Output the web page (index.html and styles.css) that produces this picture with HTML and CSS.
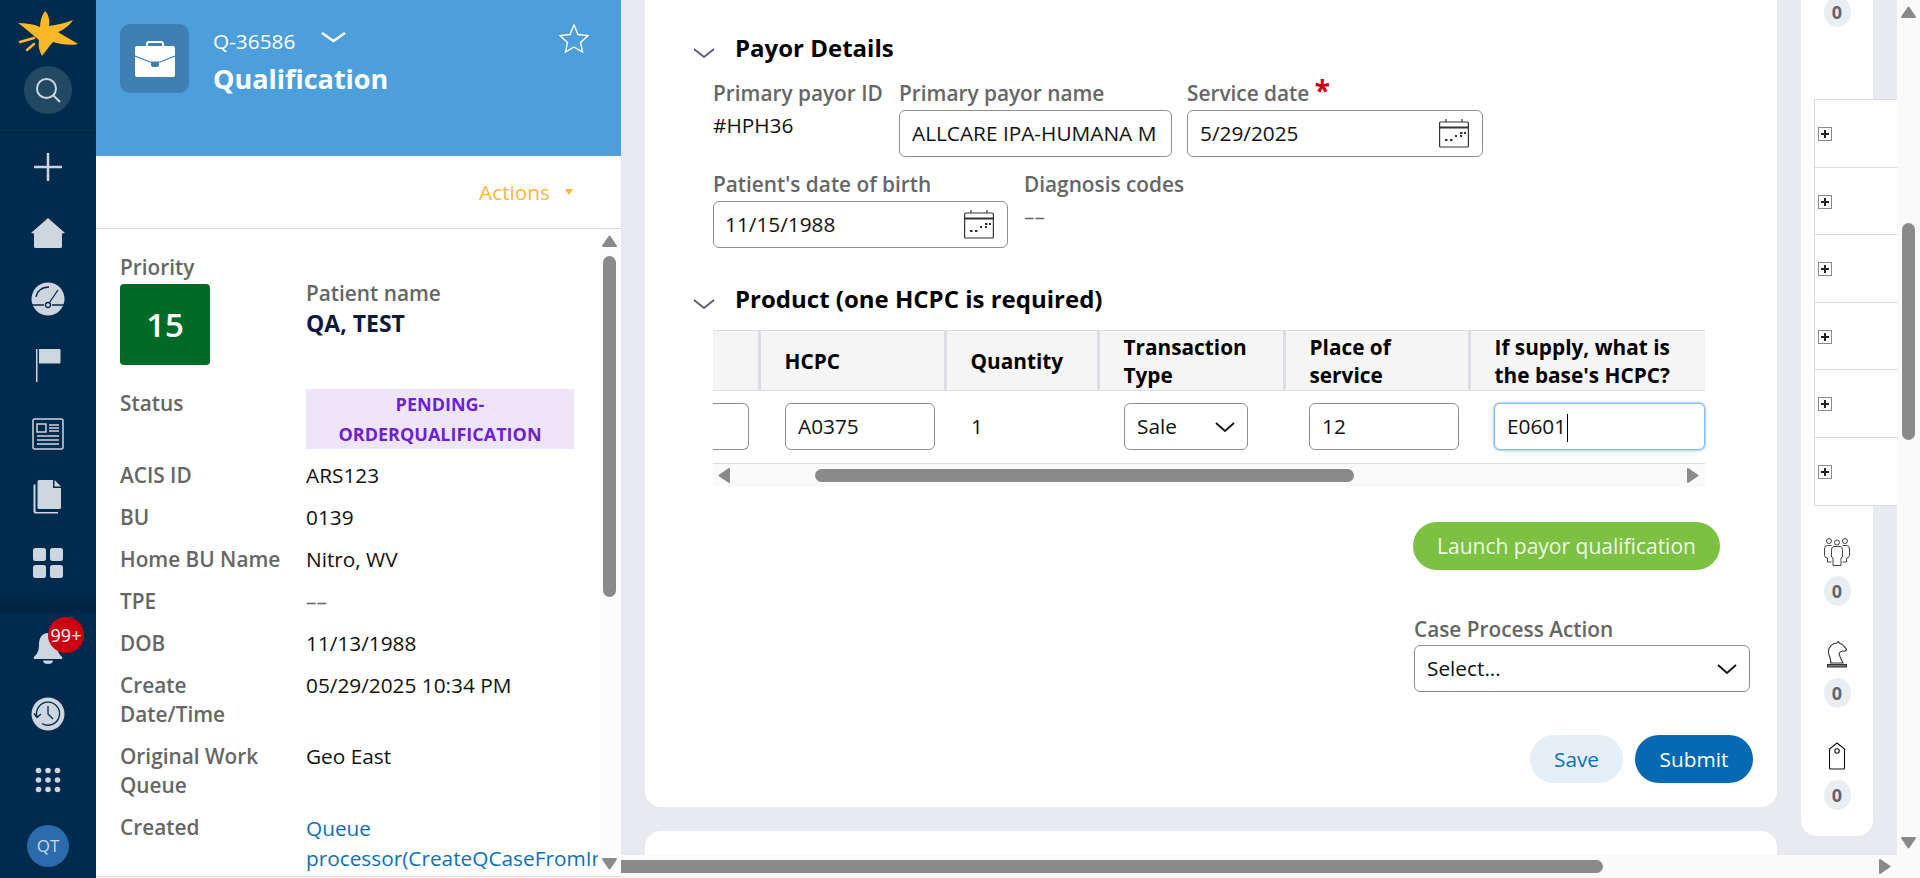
FILE: index.html
```html
<!DOCTYPE html>
<html>
    <head>
        <title>Qualification Q-36586</title>
        <link rel="stylesheet" href="styles.css">
    </head>
    <body>
        <nav class="nav">
            <div class="nav-top">
                <svg class="logo" width="66" height="48" viewBox="15 10 66 48">
                    <path fill="#fdb827" d="M45 11C49 15 50 21 49 26C57 25 66 23 73 20C69 26 63 30 58 32C64 36 72 40 78 44C70 46 60 44 53 42C49 46 46 51 42 56C39 51 38 45 39 40C33 35 25 28 18 23C26 23 33 24 40 27C40 21 42 15 45 11Z"/>
                    <path fill="none" stroke="#fdb827" stroke-width="2.5" stroke-linecap="round" d="M20 42L34 38M27 50L34 44"/>
                </svg>
                <div class="search">
                    <svg width="26" height="26" viewBox="0 0 26 26" fill="none" stroke="#cdd5df" stroke-width="2"><circle cx="11.500" cy="11.500" r="9.500"/><path d="M18.500 18.500L25 25"/></svg>
                </div>
            </div>
            <div class="nav-mid">
                <div class="nav-slot">
                    <svg width="28" height="28" viewBox="0 0 28 28" fill="none" stroke="#cdd5df" stroke-width="2.500"><path d="M14 0V28M0 14H28"/></svg>
                </div>
                <div class="nav-slot">
                    <svg width="34" height="30" viewBox="0 0 34 30"><path fill="#cdd5df" d="M17 0L34 15L31 15.500V28.500Q31 30 29.500 30H4.500Q3 30 3 28.500V15.500L0 15Z"/></svg>
                </div>
                <div class="nav-slot">
                    <svg width="34" height="34" viewBox="0 0 34 34"><circle cx="17" cy="17" r="16.500" fill="#cdd5df"/><path fill="none" stroke="#002b4d" stroke-width="1.300" d="M5 15C6 9 11 5 18 5M1 23H13M21 23H33M18.500 20.500L27 8"/><circle cx="17" cy="23" r="2.500" fill="#cdd5df" stroke="#002b4d" stroke-width="1.300"/></svg>
                </div>
                <div class="nav-slot">
                    <svg width="26" height="34" viewBox="0 0 26 34"><path fill="#cdd5df" d="M1 1H2.500V34H1ZM4 1H24.500Q25.500 1 25.500 2V14.500Q25.500 15.500 24.500 15.500H4Z"/></svg>
                </div>
                <div class="nav-slot nav-slot-low">
                    <svg width="32" height="32" viewBox="0 0 32 32" fill="none" stroke="#cdd5df" stroke-width="1.500"><rect x="1" y="1" width="30" height="30" rx="1.500"/><rect x="5" y="6" width="9" height="8"/><path d="M17 7H27M17 10H27M17 13H27M5 18H27M5 22H27M5 26H27"/></svg>
                </div>
                <div class="nav-slot">
                    <svg width="30" height="34" viewBox="0 0 30 34"><path fill="#cdd5df" d="M6 0H20V8H28V27.500Q28 29 26.500 29H6Q4.500 29 4.500 27.500V1.500Q4.500 0 6 0ZM21.500 0L28 6.500H21.500ZM2.500 4V30.500Q2.500 32 4 32H25V33.500H2.500Q0.500 33.500 0.500 31.500V5.500Q0.500 4 2.500 4Z"/></svg>
                </div>
                <div class="nav-slot">
                    <svg width="32" height="32" viewBox="0 0 32 32" fill="#cdd5df"><rect x="1" y="1" width="13" height="13" rx="2.500"/><rect x="18" y="1" width="13" height="13" rx="2.500"/><rect x="1" y="18" width="13" height="13" rx="2.500"/><rect x="18" y="18" width="13" height="13" rx="2.500"/></svg>
                </div>
            </div>
            <div class="nav-bottom">
                <div class="nav-slot">
                    <svg width="30" height="32" viewBox="0 0 30 32"><path fill="#cdd5df" d="M15 1C9 1 6 6 6 12C6 18 5 21 1 25Q0 27 2 27H28Q30 27 29 25C25 21 24 18 24 12C24 6 21 1 15 1ZM10 28.500H20C20 31 18 32 15 32C12 32 10 31 10 28.500Z"/></svg>
                    <span class="notif">99+</span>
                </div>
                <div class="nav-slot">
                    <svg width="34" height="34" viewBox="0 0 34 34"><circle cx="17" cy="17" r="16.500" fill="#cdd5df"/><path fill="none" stroke="#002b4d" stroke-width="1.300" d="M6 20A11.500 11.500 0 1 1 11 26.500M3 16.500L6 20.500L10 17M17 9V17L22 22"/></svg>
                </div>
                <div class="nav-slot">
                    <svg width="26" height="26" viewBox="0 0 26 26" fill="#cdd5df"><circle cx="3.500" cy="3.500" r="2.800"/><circle cx="13" cy="3.500" r="2.800"/><circle cx="22.500" cy="3.500" r="2.800"/><circle cx="3.500" cy="13" r="2.800"/><circle cx="13" cy="13" r="2.800"/><circle cx="22.500" cy="13" r="2.800"/><circle cx="3.500" cy="22.500" r="2.800"/><circle cx="13" cy="22.500" r="2.800"/><circle cx="22.500" cy="22.500" r="2.800"/></svg>
                </div>
                <div class="nav-slot">
                    <div class="avatar">QT</div>
                </div>
            </div>
        </nav>

        <section class="case-panel">
            <header class="case-head">
                <div class="case-icon">
                    <svg width="40" height="36" viewBox="0 0 40 36"><path fill="none" stroke="#fff" stroke-width="2" d="M12 6V3Q12 1 14 1H26Q28 1 28 3V6"/><rect y="5" width="40" height="31" rx="2" fill="#fff"/><path fill="none" stroke="#3f7fb3" stroke-width="1.200" d="M0 15L15 21H25L40 15"/><path fill="#3f7fb3" d="M16 21H24V24Q24 26 22 26H18Q16 26 16 24Z"/></svg>
                </div>
                <div class="case-title">
                    <div class="case-id">
                        <span>Q-36586</span>
                        <svg width="25" height="11" viewBox="0 0 25 11" fill="none" stroke="#fff" stroke-width="2.500"><path d="M1 1L12.500 9L24 1"/></svg>
                    </div>
                    <div class="case-name">Qualification</div>
                </div>
                <svg class="star" width="30" height="30" viewBox="0 0 30 30"><path fill="none" stroke="#fff" stroke-width="1.400" d="M15 2L19 11.500L29 12.500L21.500 19.500L23.500 29L15 24L6.500 29L8.500 19.500L1 12.500L11 11.500Z"/></svg>
            </header>
            <div class="case-actions">
                <span>Actions</span>
                <span class="caret"></span>
            </div>
            <div class="case-body">
                <div class="case-fields">
                    <div class="field-label">
                        Priority
                        <div class="priority">15</div>
                    </div>
                    <div class="patient">
                        <div class="field-label">Patient name</div>
                        <div class="patient-name">QA, TEST</div>
                    </div>
                    <div class="field-label">Status</div>
                    <div class="status">PENDING-<br>ORDERQUALIFICATION</div>
                    <div class="field-label">ACIS ID</div>
                    <div class="field-value">ARS123</div>
                    <div class="field-label">BU</div>
                    <div class="field-value">0139</div>
                    <div class="field-label">Home BU Name</div>
                    <div class="field-value">Nitro, WV</div>
                    <div class="field-label">TPE</div>
                    <div class="field-value muted">––</div>
                    <div class="field-label">DOB</div>
                    <div class="field-value">11/13/1988</div>
                    <div class="field-label">Create Date/Time</div>
                    <div class="field-value">05/29/2025 10:34 PM</div>
                    <div class="field-label">Original Work Queue</div>
                    <div class="field-value">Geo East</div>
                    <div class="field-label">Created</div>
                    <div class="field-value link">Queue<br>processor(CreateQCaseFromInbound)</div>
                </div>
                <div class="case-scroll">
                    <svg class="arrow" width="15" height="12" viewBox="0 0 15 12"><path fill="#8a8a8a" stroke="#8a8a8a" stroke-width="2" stroke-linejoin="round" d="M7.500 1.500L14 11H1Z"/></svg>
                    <div class="case-thumb"></div>
                    <svg class="arrow arrow-end" width="15" height="12" viewBox="0 0 15 12"><path fill="#8a8a8a" stroke="#8a8a8a" stroke-width="2" stroke-linejoin="round" d="M7.500 10.500L14 1H1Z"/></svg>
                </div>
            </div>
        </section>

        <section class="work">
            <div class="work-top">
                <div class="work-scroll">
                    <div class="cards">
                        <div class="card">
                            <h2 class="section-head">
                                <svg width="22" height="10" viewBox="0 0 22 10" fill="none" stroke="#545a7a" stroke-width="1.800"><path d="M1 1L11 9L21 1"/></svg>
                                Payor Details
                            </h2>
                            <div class="payor-row payor-row-one">
                                <div>
                                    <div class="form-label">Primary payor ID</div>
                                    <div class="form-value">#HPH36</div>
                                </div>
                                <div>
                                    <div class="form-label">Primary payor name</div>
                                    <div class="input">ALLCARE IPA-HUMANA M</div>
                                </div>
                                <div>
                                    <div class="form-label">Service date <span class="required">*</span></div>
                                    <div class="input input-date">
                                        5/29/2025
                                        <svg width="30" height="29" viewBox="0 0 30 29" fill="none" stroke="#333" stroke-width="1.200"><rect x="0.600" y="3" width="28.800" height="25" rx="1"/><path d="M0.600 8.500H29.400" stroke-width="2"/><path d="M7 0V3M23 0V3"/><path d="M6 21H8.500M11 21H13.500M16 17H18M21 14H23.500M25 14H27M21 17H23" stroke-width="1.800"/></svg>
                                    </div>
                                </div>
                            </div>
                            <div class="payor-row payor-row-two">
                                <div>
                                    <div class="form-label">Patient's date of birth</div>
                                    <div class="input input-date">
                                        11/15/1988
                                        <svg width="30" height="29" viewBox="0 0 30 29" fill="none" stroke="#333" stroke-width="1.200"><rect x="0.600" y="3" width="28.800" height="25" rx="1"/><path d="M0.600 8.500H29.400" stroke-width="2"/><path d="M7 0V3M23 0V3"/><path d="M6 21H8.500M11 21H13.500M16 17H18M21 14H23.500M25 14H27M21 17H23" stroke-width="1.800"/></svg>
                                    </div>
                                </div>
                                <div>
                                    <div class="form-label">Diagnosis codes</div>
                                    <div class="form-value muted">––</div>
                                </div>
                            </div>

                            <h2 class="section-head section-head-product">
                                <svg width="22" height="10" viewBox="0 0 22 10" fill="none" stroke="#545a7a" stroke-width="1.800"><path d="M1 1L11 9L21 1"/></svg>
                                Product (one HCPC is required)
                            </h2>
                            <div class="product">
                                <table class="product-table">
                                    <colgroup>
                                        <col class="col-first">
                                        <col class="col-hcpc">
                                        <col class="col-qty">
                                        <col class="col-type">
                                        <col class="col-place">
                                        <col class="col-base">
                                    </colgroup>
                                    <tr>
                                        <th></th>
                                        <th>HCPC</th>
                                        <th>Quantity</th>
                                        <th>Transaction Type</th>
                                        <th>Place of service</th>
                                        <th>If supply, what is the base's HCPC?</th>
                                    </tr>
                                    <tr>
                                        <td class="cell-first"><div class="input input-cut"></div></td>
                                        <td><div class="input input-cell">A0375</div></td>
                                        <td>1</td>
                                        <td>
                                            <div class="input input-select">
                                                Sale
                                                <svg width="20" height="10" viewBox="0 0 20 10" fill="none" stroke="#111" stroke-width="1.800"><path d="M1 1L10 9L19 1"/></svg>
                                            </div>
                                        </td>
                                        <td><div class="input input-cell">12</div></td>
                                        <td><div class="input input-focus">E0601<span class="text-caret"></span></div></td>
                                    </tr>
                                </table>
                                <div class="table-scroll">
                                    <svg width="12" height="15" viewBox="0 0 12 15"><path fill="#8a8a8a" stroke="#8a8a8a" stroke-width="2" stroke-linejoin="round" d="M1.500 7.500L11 1V14Z"/></svg>
                                    <div class="table-thumb"></div>
                                    <svg width="12" height="15" viewBox="0 0 12 15"><path fill="#8a8a8a" stroke="#8a8a8a" stroke-width="2" stroke-linejoin="round" d="M10.500 7.500L1 1V14Z"/></svg>
                                </div>
                            </div>

                            <div class="launch-row">
                                <button class="btn btn-launch">Launch payor qualification</button>
                            </div>
                            <div class="process">
                                <div class="form-label form-label-tight">Case Process Action</div>
                                <div class="input input-select">
                                    Select...
                                    <svg width="20" height="10" viewBox="0 0 20 10" fill="none" stroke="#111" stroke-width="1.800"><path d="M1 1L10 9L19 1"/></svg>
                                </div>
                            </div>
                            <div class="form-buttons">
                                <button class="btn btn-save">Save</button>
                                <button class="btn btn-submit">Submit</button>
                            </div>
                        </div>
                        <div class="card card-next"></div>
                    </div>
                    <aside class="rail">
                        <div class="count count-top">0</div>
                        <div class="widgets">
                            <div class="widget"><span class="expand"></span></div>
                            <div class="widget"><span class="expand"></span></div>
                            <div class="widget"><span class="expand"></span></div>
                            <div class="widget"><span class="expand"></span></div>
                            <div class="widget"><span class="expand"></span></div>
                            <div class="widget"><span class="expand"></span></div>
                        </div>
                        <svg class="rail-icon rail-icon-first" width="28" height="28" viewBox="0 0 28 28" fill="none" stroke="#444" stroke-width="1"><circle cx="6" cy="3" r="2.500"/><circle cx="14" cy="4.500" r="2.500"/><circle cx="22" cy="3" r="2.500"/><path d="M8.500 7.500H4.500Q1.500 7.500 1.500 11V17.500Q1.500 19 3 19.500L4.500 20V24H8.500M19.500 7.500H23.500Q26.500 7.500 26.500 11V17.500Q26.500 19 25 19.500L23.500 20V24H19.500"/><path d="M11 8.500H17Q19.500 8.500 19.500 11.500V19L18 20V27.500H10V20L8.500 19V11.500Q8.500 8.500 11 8.500Z"/></svg>
                        <div class="count">0</div>
                        <svg class="rail-icon rail-icon-second" width="20" height="27" viewBox="0 0 20 27" fill="none" stroke="#333" stroke-width="1.100"><path d="M3.500 22C5 18 1 15 1.500 10C2 5 6 2 10 2L11 0.500L13 2.500C16 3.500 18 6 19.500 8.500C19 10.500 17 10.500 15.500 10C14 9.500 13 11 12 12.500C12.500 16 15 19 16 22Z"/><path d="M0.500 23.500H19.500V26H0.500Z" fill="#777"/></svg>
                        <div class="count">0</div>
                        <svg class="rail-icon" width="18" height="28" viewBox="0 0 18 28" fill="none" stroke="#111" stroke-width="1.100"><path d="M9 1L16.500 7V26Q16.500 27 15.500 27H2.500Q1.500 27 1.500 26V7Z"/><circle cx="9" cy="9" r="2.200"/></svg>
                        <div class="count">0</div>
                    </aside>
                </div>
                <div class="page-vbar">
                    <svg class="arrow" width="15" height="12" viewBox="0 0 15 12"><path fill="#8a8a8a" stroke="#8a8a8a" stroke-width="2" stroke-linejoin="round" d="M7.500 1.500L14 11H1Z"/></svg>
                    <div class="page-vthumb"></div>
                    <svg class="arrow arrow-end" width="15" height="12" viewBox="0 0 15 12"><path fill="#8a8a8a" stroke="#8a8a8a" stroke-width="2" stroke-linejoin="round" d="M7.500 10.500L14 1H1Z"/></svg>
                </div>
            </div>
            <div class="page-hbar">
                <div class="page-hthumb"></div>
                <svg width="12" height="15" viewBox="0 0 12 15"><path fill="#8a8a8a" stroke="#8a8a8a" stroke-width="2" stroke-linejoin="round" d="M10.500 7.500L1 1V14Z"/></svg>
            </div>
        </section>
    </body>
</html>
```

FILE: styles.css
```css
* {
    box-sizing: border-box;
}
html, body {
    height: 100%;
}
body {
    margin: 0;
    height: 878px;
    display: flex;
    overflow: hidden;
    font-family: "Open Sans", "Noto Sans", sans-serif;
    font-size: 20.800px;
    line-height: 29px;
    color: #111;
    background: #e9eaf0;
}

/* left nav */
.nav {
    width: 96px;
    flex: none;
    display: flex;
    flex-direction: column;
    background: #002b4d;
    overflow: hidden;
}
.nav-top {
    height: 133px;
    flex: none;
    padding-top: 10px;
    border-bottom: 1px solid #00213b;
    display: flex;
    flex-direction: column;
    align-items: center;
}
.logo {
    margin-left: -1px;
}
.search {
    width: 48px;
    height: 48px;
    margin-top: 8px;
    border-radius: 50%;
    background: #234863;
    display: flex;
    align-items: center;
    justify-content: center;
}
.nav-mid {
    height: 480px;
    flex: none;
    padding-top: 1px;
    background: linear-gradient(#002b4d 455px, #002440);
}
.nav-bottom {
    padding-top: 2px;
}
.nav-slot {
    height: 66px;
    position: relative;
    display: flex;
    align-items: center;
    justify-content: center;
}
.nav-slot-low {
    padding-top: 6px;
}
.notif {
    position: absolute;
    left: 48px;
    top: 2px;
    width: 36px;
    height: 36px;
    border-radius: 50%;
    background: #cc0012;
    color: #fff;
    font-size: 18px;
    line-height: 36px;
    text-align: center;
}
.avatar {
    width: 42px;
    height: 42px;
    border-radius: 50%;
    background: #2a6cab;
    color: #cdd9e6;
    font-size: 17px;
    line-height: 42px;
    text-align: center;
}

/* case summary */
.case-panel {
    width: 525px;
    flex: none;
    display: flex;
    flex-direction: column;
    background: #fff;
}
.case-head {
    height: 156px;
    flex: none;
    padding: 24px 32px 0 24px;
    display: flex;
    background: #4d9fdc;
    color: #fff;
}
.case-icon {
    width: 69px;
    height: 69px;
    border-radius: 10px;
    background: #3f7fb3;
    display: flex;
    align-items: center;
    justify-content: center;
}
.case-title {
    margin-left: 24px;
    flex: 1;
}
.case-id {
    height: 34px;
    line-height: 34px;
    display: flex;
    align-items: center;
    gap: 26px;
}
.case-id svg {
    margin-top: -8px;
}
.case-name {
    margin-top: 2px;
    font-size: 27px;
    font-weight: 700;
    line-height: 38px;
}
.star {
    margin-top: -1px;
}
.case-actions {
    height: 73px;
    flex: none;
    padding: 0 48px 0 0;
    border-bottom: 1px solid #d5dae3;
    display: flex;
    align-items: center;
    justify-content: flex-end;
    gap: 15px;
    color: #ffb638;
}
.caret {
    width: 0;
    height: 0;
    border-left: 4.500px solid transparent;
    border-right: 4.500px solid transparent;
    border-top: 6px solid #ffb638;
}
.case-body {
    height: 648px;
    flex: none;
    display: flex;
    border-bottom: 1px solid #d5dae3;
}
.case-fields {
    width: 502px;
    flex: none;
    margin-right: 2px;
    padding: 24px 0 0 24px;
    display: grid;
    grid-template-columns: 186px 292px;
    grid-auto-rows: min-content;
    row-gap: 13px;
    overflow: hidden;
}
.field-label {
    color: #666;
    font-weight: 600;
    padding-right: 20px;
}
.field-value {
    white-space: nowrap;
    overflow: hidden;
}
.muted {
    color: #666;
}
.link {
    color: #0d6fba;
    line-height: 30px;
}
.priority {
    width: 90px;
    height: 81px;
    margin: 2px 0 11px;
    border-radius: 4px;
    background: #026a27;
    color: #fff;
    font-size: 33px;
    font-weight: 600;
    line-height: 81px;
    text-align: center;
}
.patient {
    padding-top: 26px;
}
.patient-name {
    margin-top: 1px;
    font-size: 23px;
    font-weight: 700;
    color: #0d1a3c;
}
.status {
    width: 268px;
    height: 60px;
    margin-bottom: -1px;
    background: #eee6f8;
    color: #6f1fd6;
    font-size: 18px;
    font-weight: 700;
    line-height: 30px;
    text-align: center;
}
.case-scroll {
    width: 21px;
    padding: 6px 0 6px 2px;
    display: flex;
    flex-direction: column;
    background: #fcfcfc;
}
.arrow {
    flex: none;
    display: block;
}
.arrow-end {
    margin-top: auto;
}
.case-thumb {
    width: 13px;
    height: 341px;
    margin: 9px 0 0 1px;
    border-radius: 7px;
    background: #8a8a8a;
}

/* work area */
.work {
    flex: 1;
    min-width: 0;
    display: flex;
    flex-direction: column;
}
.work-top {
    height: 855px;
    flex: none;
    display: flex;
}
.work-scroll {
    flex: 1;
    min-width: 0;
    padding: 0 24px;
    display: flex;
    gap: 24px;
    overflow: hidden;
}
.cards {
    width: 1132px;
    flex: none;
}
.card {
    height: 807px;
    padding: 32px 24px 0 48px;
    border-radius: 0 0 16px 16px;
    background: #fff;
}
.card-next {
    height: 60px;
    margin-top: 24px;
    padding: 0;
    border-radius: 16px 16px 0 0;
}
.section-head {
    height: 32px;
    margin: 0;
    display: flex;
    align-items: center;
    gap: 20px;
    font-size: 24px;
    line-height: 32px;
    font-weight: 700;
    color: #000;
}
.section-head svg {
    margin-top: 10px;
}
.section-head-product {
    margin-top: 35px;
}
.payor-row {
    margin: 15px 0 0 20px;
    display: grid;
}
.payor-row-one {
    grid-template-columns: 186px 288px 296px;
}
.payor-row-two {
    margin-top: 13px;
    grid-template-columns: 311px 300px;
}
.form-label {
    height: 31px;
    color: #666;
    font-weight: 600;
    white-space: nowrap;
}
.form-label-tight {
    height: 30px;
}
.required {
    color: #cc0012;
    font-size: 28px;
    font-weight: 700;
    line-height: 20px;
}
.form-value {
    margin-top: 1px;
}
.input {
    height: 47px;
    padding: 0 12px;
    border: 1px solid #8f8f8f;
    border-radius: 6px;
    background: #fff;
    line-height: 45px;
    white-space: nowrap;
    overflow: hidden;
}
.payor-row-one > div:nth-child(2) .input {
    width: 273px;
}
.input-date {
    display: flex;
    align-items: center;
    justify-content: space-between;
}
.payor-row-one .input-date {
    width: 296px;
}
.payor-row-two .input-date {
    width: 295px;
    padding-left: 11px;
}
.input-date svg {
    margin-right: 1px;
}

/* product table */
.product {
    width: 992px;
    margin: 15px 0 0 20px;
}
.product-table {
    width: 992px;
    table-layout: fixed;
    border-collapse: collapse;
}
.col-first {
    width: 46px;
}
.col-hcpc {
    width: 186px;
}
.col-qty {
    width: 153px;
}
.col-type {
    width: 186px;
}
.col-place {
    width: 185px;
}
.product-table th {
    height: 60px;
    padding: 0 20px 0 24px;
    border-top: 1px solid #d9dde6;
    border-bottom: 1px solid #d9dde6;
    border-left: 3px solid #dcdde5;
    background: #f5f5f6;
    color: #000;
    font-weight: 700;
    line-height: 28px;
    text-align: left;
}
.product-table th:first-child {
    border-left: 0;
}
.product-table th:last-child {
    padding-right: 0;
}
.product-table td {
    height: 73px;
    padding: 0 0 1px 26px;
    border-bottom: 1px solid #d9dde6;
}
.product-table td:nth-child(n+5) {
    padding-left: 25px;
}
.product-table td.cell-first {
    padding: 0 0 1px;
}
.input-cut {
    width: 36px;
    border-left: 0;
    border-radius: 0 6px 6px 0;
}
.input-cell {
    width: 150px;
}
.product-table .input-select {
    width: 124px;
}
.input-select {
    display: flex;
    align-items: center;
    justify-content: space-between;
}
.input-focus {
    width: 211px;
    border: 1px solid #7fbcf5;
    box-shadow: 0 0 2px 1px #a9d3fa;
}
.text-caret {
    display: inline-block;
    width: 1px;
    height: 28px;
    margin-left: 1px;
    background: #000;
    vertical-align: middle;
}
.table-scroll {
    height: 23px;
    padding: 0 6px 0 5px;
    display: flex;
    align-items: center;
    background: #fafafa;
}
.table-thumb {
    width: 539px;
    height: 13px;
    margin: 0 auto 0 85px;
    border-radius: 7px;
    background: #8a8a8a;
}

.launch-row {
    margin-top: 35px;
    padding-right: 33px;
    display: flex;
    justify-content: flex-end;
}
.btn {
    height: 48px;
    padding: 0;
    border: 0;
    border-radius: 24px;
    font-family: inherit;
    font-size: 20.800px;
}
.btn-launch {
    width: 307px;
    background: #7cc142;
    color: #eff8e6;
    font-size: 21px;
}
.process {
    width: 336px;
    margin: 45px 0 0 721px;
}
.form-buttons {
    margin-top: 43px;
    display: flex;
    justify-content: flex-end;
    gap: 12px;
}
.btn-save {
    width: 93px;
    background: #e4eff8;
    color: #0d6fba;
}
.btn-submit {
    width: 118px;
    background: #0468b3;
    color: #fff;
}

/* right rail */
.rail {
    width: 72px;
    height: 836px;
    flex: none;
    display: flex;
    flex-direction: column;
    align-items: center;
    border-radius: 0 0 16px 16px;
    background: #fff;
}
.count {
    width: 27px;
    height: 30px;
    flex: none;
    margin-top: 10px;
    border-radius: 50%;
    background: #e9eef3;
    color: #666;
    font-size: 18px;
    font-weight: 700;
    line-height: 30px;
    text-align: center;
}
.count-top {
    margin-top: -3px;
}
.widgets {
    width: 83px;
    flex: none;
    margin: 72px 0 0 0;
    align-self: flex-start;
    transform: translateX(13px);
    border: 1px solid #d5dae3;
    border-right: 0;
    background: #fff;
}
.widget {
    height: 67.500px;
    padding: 2px 0 0 3px;
    border-bottom: 1px solid #d5dae3;
    display: flex;
    align-items: center;
}
.widget:last-child {
    border-bottom: 0;
}
.expand {
    width: 14px;
    height: 14px;
    border: 1px solid #8a8a8a;
    background: linear-gradient(#222, #222) center / 8px 2px no-repeat, linear-gradient(#222, #222) center / 2px 8px no-repeat, #fff;
}
.rail-icon {
    flex: none;
    margin-top: 34px;
}
.rail-icon-first {
    margin-top: 32px;
}
.rail-icon-second {
    margin-top: 35px;
}

/* page scrollbars */
.page-vbar {
    width: 23px;
    flex: none;
    padding: 6px 4px;
    display: flex;
    flex-direction: column;
    background: #fafafa;
}
.page-vthumb {
    width: 13px;
    height: 217px;
    margin: 205px 0 0 1px;
    border-radius: 7px;
    background: #8a8a8a;
}
.page-hbar {
    flex: 1;
    padding-right: 29px;
    display: flex;
    align-items: center;
    justify-content: space-between;
    background: #fafafa;
}
.page-hthumb {
    width: 982px;
    height: 13px;
    border-radius: 0 7px 7px 0;
    background: #8a8a8a;
}
```
